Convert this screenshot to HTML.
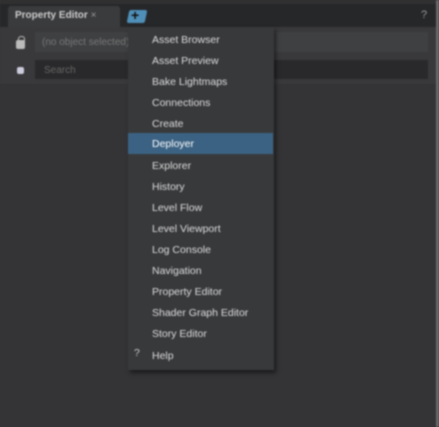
<html><head><style>
body{margin:0;width:439px;height:427px;background:#343436;font-family:"Liberation Sans",sans-serif;font-size:10.5px;position:relative;overflow:hidden;filter:blur(0.8px)}
div{position:absolute}
.it{left:152px;color:#ddd;height:21px;line-height:21px}
</style></head><body>
<div style="left:0;top:0;width:439px;height:4px;background:#303031"></div>
<div style="left:0;top:4px;width:436px;height:23px;background:#262729"></div>
<div style="left:436px;top:0;width:3px;height:427px;background:#6a6a6a"></div>
<div style="left:8px;top:6px;width:112px;height:21px;background:#3a3b3d;border-radius:3px 3px 0 0"></div>
<div style="left:15px;top:10px;color:#ccc;font-weight:bold;font-size:10px">Property Editor <span style="color:#999;font-weight:normal">×</span></div>
<div style="left:128px;top:10px;width:18px;height:13px;background:#4f8fb8;border-radius:2px;transform:skewX(-12deg)"></div>
<div style="left:131px;top:7px;color:#111;font-weight:bold;font-size:14px">+</div>
<div style="left:421px;top:9px;color:#999;font-size:11px">?</div>
<div style="left:0;top:27px;width:436px;height:57px;background:#39393b"></div>
<div style="left:16px;top:40px;width:9px;height:9px;background:#bbb;border-radius:2px"></div>
<div style="left:18px;top:36px;width:5px;height:6px;border:1.5px solid #bbb;border-bottom:none;border-radius:3px 3px 0 0"></div>
<div style="left:35px;top:32px;width:393px;height:20px;background:#3f4042"></div>
<div style="left:42px;top:37px;color:#777;font-size:10px">(no object selected)</div>
<div style="left:17px;top:67px;width:7px;height:7px;background:#ccd;border-radius:2px"></div>
<div style="left:35px;top:60px;width:393px;height:19px;background:#29292b"></div>
<div style="left:44px;top:65px;color:#666;font-size:10px">Search</div>
<div style="left:128px;top:27px;width:146px;height:343px;background:#38393b;box-shadow:2px 3px 4px rgba(0,0,0,.5)">
</div>
<div style="left:128px;top:133px;width:145px;height:21px;background:#3b6283"></div>
<div class="it" style="top:30px">Asset Browser</div>
<div class="it" style="top:51px">Asset Preview</div>
<div class="it" style="top:72px">Bake Lightmaps</div>
<div class="it" style="top:93px">Connections</div>
<div class="it" style="top:114px">Create</div>
<div class="it" style="top:134px;color:#fff">Deployer</div>
<div class="it" style="top:156px">Explorer</div>
<div class="it" style="top:177px">History</div>
<div class="it" style="top:198px">Level Flow</div>
<div class="it" style="top:219px">Level Viewport</div>
<div class="it" style="top:240px">Log Console</div>
<div class="it" style="top:261px">Navigation</div>
<div class="it" style="top:282px">Property Editor</div>
<div class="it" style="top:303px">Shader Graph Editor</div>
<div class="it" style="top:324px">Story Editor</div>
<div class="it" style="top:346px">Help</div>
<div style="left:134px;top:347px;color:#ccc">?</div>
</body></html>
